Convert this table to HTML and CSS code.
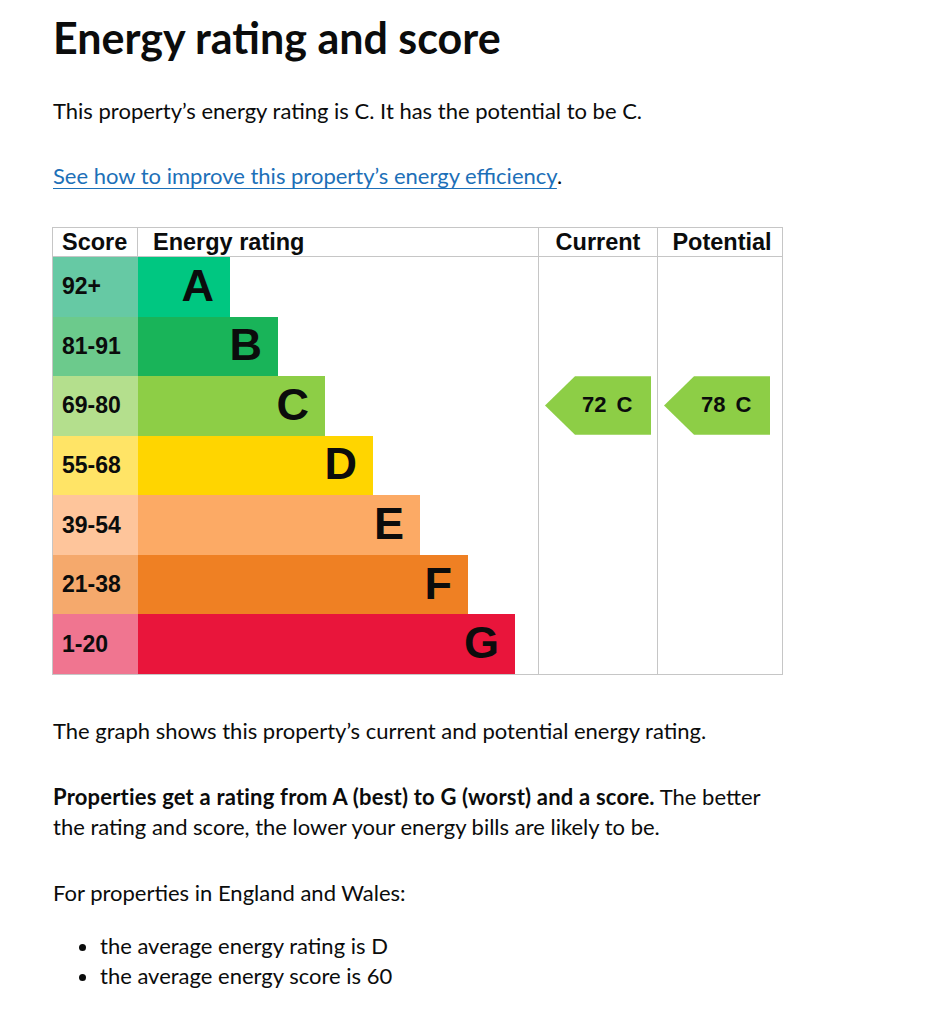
FILE: index.html
```html
<!DOCTYPE html>
<html lang="en">
<head>
<meta charset="utf-8">
<title>Energy rating and score</title>
<link rel="stylesheet" href="styles.css">
</head>
<body>
<main class="page">
  <h1 class="title">Energy rating and score</h1>
  <p class="body-text">This property’s energy rating is C. It has the potential to be C.</p>
  <p class="body-text link-para"><a class="link" href="#improve">See how to improve this property’s energy efficiency</a>.</p>

  <div class="chart">
    <div class="head head-score">Score</div>
    <div class="head head-rating">Energy rating</div>
    <div class="head head-current">Current</div>
    <div class="head head-potential">Potential</div>

    <div class="bands">
      <div class="band"><div class="score s-a">92+</div><div class="bar b-a" style="width:92px">A</div></div>
      <div class="band"><div class="score s-b">81-91</div><div class="bar b-b" style="width:140px">B</div></div>
      <div class="band"><div class="score s-c">69-80</div><div class="bar b-c" style="width:187px">C</div></div>
      <div class="band"><div class="score s-d">55-68</div><div class="bar b-d" style="width:235px">D</div></div>
      <div class="band"><div class="score s-e">39-54</div><div class="bar b-e" style="width:282px">E</div></div>
      <div class="band"><div class="score s-f">21-38</div><div class="bar b-f" style="width:330px">F</div></div>
      <div class="band"><div class="score s-g">1-20</div><div class="bar b-g" style="width:377px">G</div></div>
    </div>

    <div class="col col-current">
      <div class="arrow arrow-c">72 C</div>
    </div>
    <div class="col col-potential">
      <div class="arrow arrow-c">78 C</div>
    </div>
  </div>

  <p class="body-text after-chart">The graph shows this property’s current and potential energy rating.</p>
  <p class="body-text para-props"><strong class="strong">Properties get a rating from A (best) to G (worst) and a score.</strong> The better the rating and score, the lower your energy bills are likely to be.</p>
  <p class="body-text para-for">For properties in England and Wales:</p>
  <ul class="bullets">
    <li>the average energy rating is D</li>
    <li>the average energy score is 60</li>
  </ul>
</main>
</body>
</html>
```

FILE: styles.css
```css
html, body {
  margin: 0;
  padding: 0;
  background: #ffffff;
}

body {
  color: #0b0c0c;
  font-family: Lato, "Liberation Sans", Arial, sans-serif;
}

.page {
  padding: 13px 0 0 53px;
}

.title {
  margin: 0;
  font-size: 43px;
  line-height: 50px;
  font-weight: 700;
}

.body-text {
  margin: 33px 0 0;
  font-size: 22px;
  line-height: 30px;
  width: 735px;
}

.link-para {
  margin-top: 35px;
}

.link {
  color: #1d70b8;
  text-decoration: underline;
  text-decoration-thickness: 1px;
  text-underline-offset: 4px;
}

.after-chart {
  margin-top: 41px;
}

.para-props {
  margin-top: 36px;
}

.strong {
  letter-spacing: 0.2px;
}

.para-for {
  margin-top: 36px;
}

.bullets {
  margin: 23px 0 0;
  padding-left: 47px;
  font-size: 22px;
  line-height: 30px;
}

/* Chart */
.chart {
  margin-top: 36px;
  margin-left: -1px;
  width: 729px;
  display: grid;
  grid-template-columns: 85px 400px 119px 125px;
  grid-template-rows: 29px 417px;
  border: 1px solid #c6c6c6;
  font-family: "Liberation Sans", Arial, sans-serif;
  font-weight: 700;
}

.head {
  font-size: 23.5px;
  line-height: 29px;
  border-bottom: 1px solid #c6c6c6;
  white-space: nowrap;
}

.head-score {
  padding-left: 9px;
  border-right: 1px solid #c6c6c6;
}

.head-rating {
  padding-left: 15px;
}

.head-current,
.head-potential {
  text-align: center;
  border-left: 1px solid #c6c6c6;
}

.head-potential {
  padding-left: 4px;
}

.bands {
  grid-column: 1 / 3;
  display: grid;
  grid-template-rows: repeat(7, 1fr);
}

.band {
  display: flex;
  align-items: stretch;
}

.score {
  width: 76px;
  flex: none;
  padding-left: 9px;
  display: flex;
  align-items: center;
  font-size: 23px;
}

.bar {
  flex: none;
  box-sizing: border-box;
  padding-right: 16px;
  padding-bottom: 2px;
  display: flex;
  align-items: center;
  justify-content: flex-end;
  font-size: 45px;
}

.s-a { background: #66c9a4; }
.s-b { background: #6cca8c; }
.s-c { background: #b4df8d; }
.s-d { background: #ffe466; }
.s-e { background: #fec59b; }
.s-f { background: #f5a96c; }
.s-g { background: #f07590; }

.b-a { background: #00c781; }
.b-b { background: #19b459; }
.b-c { background: #8dce46; }
.b-d { background: #ffd500; }
.b-e { background: #fcaa65; }
.b-f { background: #ef8023; }
.b-g { background: #e9153b; }

.col {
  border-left: 1px solid #c6c6c6;
  display: grid;
  grid-template-rows: repeat(7, 1fr);
  padding-left: 6px;
}

.arrow {
  width: 106px;
  box-sizing: border-box;
  margin: 0 0 1px;
  padding-left: 37px;
  display: flex;
  align-items: center;
  background: #8dce46;
  font-size: 22px;
  word-spacing: 4px;
  clip-path: polygon(0 50%, 30px 0, 100% 0, 100% 100%, 30px 100%);
}

.arrow-c {
  grid-row: 3;
}
```
